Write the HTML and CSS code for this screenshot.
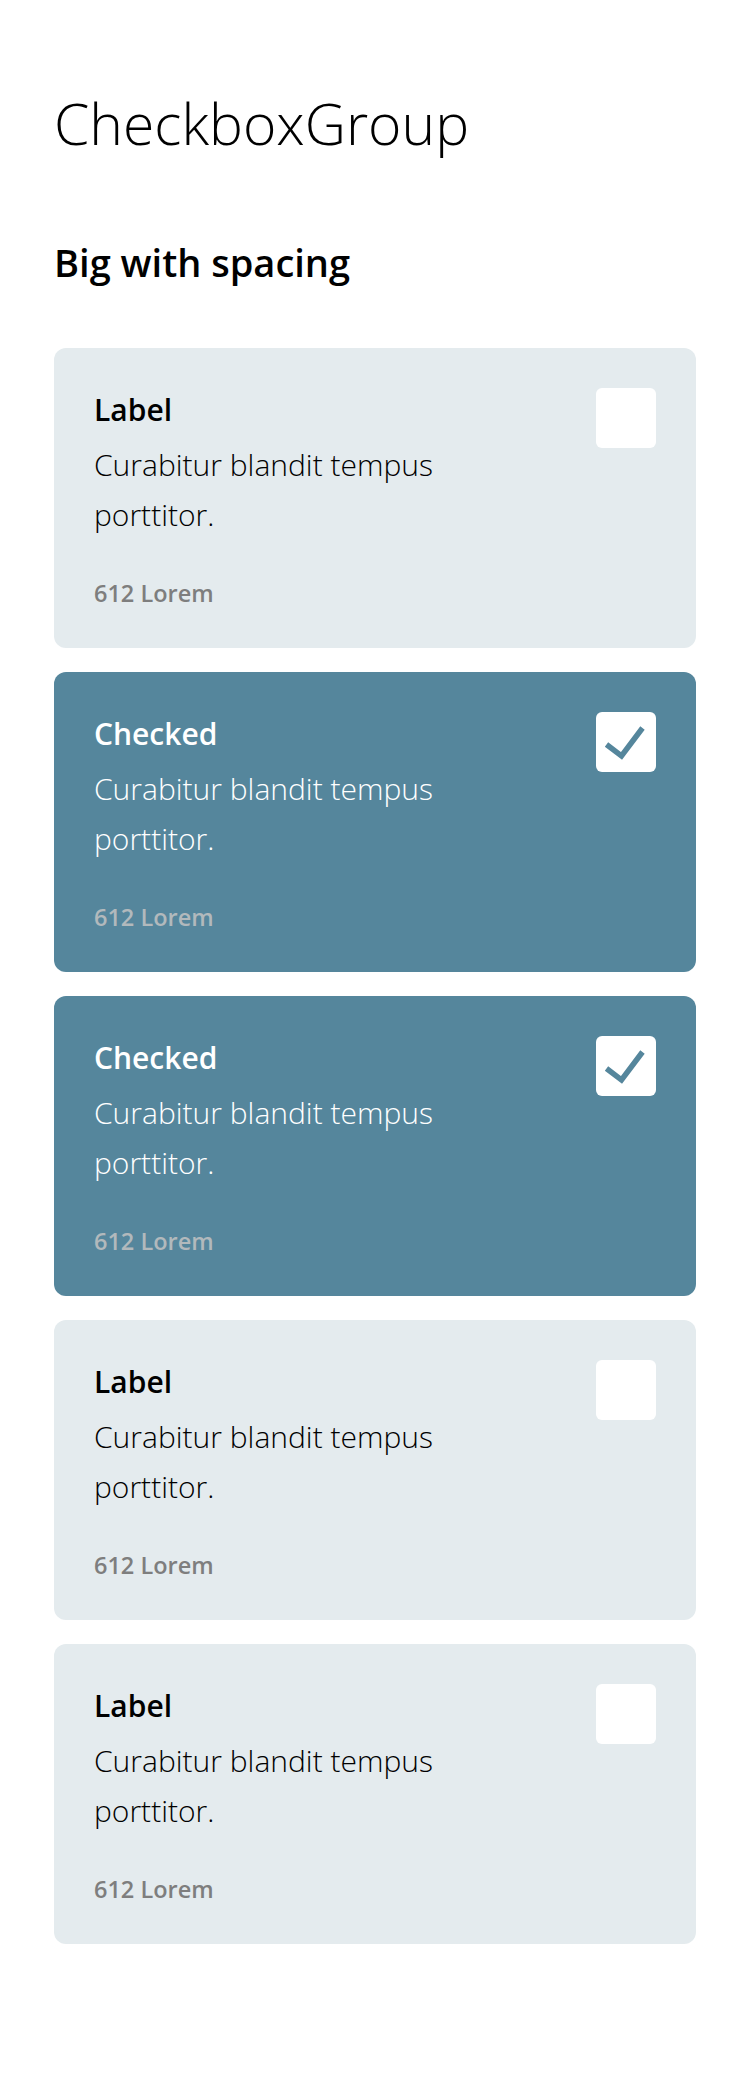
FILE: index.html
```html
<!DOCTYPE html>
<html lang="en">
<head>
<meta charset="utf-8">
<title>CheckboxGroup</title>
<link rel="stylesheet" href="styles.css">
</head>
<body>
<main class="page">
  <h1 class="title">CheckboxGroup</h1>
  <h2 class="subtitle">Big with spacing</h2>
  <div class="group">
    <label class="card">
      <div class="card-text">
        <div class="card-label">Label</div>
        <div class="card-desc">Curabitur blandit tempus porttitor.</div>
        <div class="card-meta">612 Lorem</div>
      </div>
      <span class="box"></span>
    </label>
    <label class="card checked">
      <div class="card-text">
        <div class="card-label">Checked</div>
        <div class="card-desc">Curabitur blandit tempus porttitor.</div>
        <div class="card-meta">612 Lorem</div>
      </div>
      <span class="box"><svg class="tick" viewBox="0 0 60 60" width="60" height="60"><path d="M10.5 32.5 L25.5 44 L46.5 16" fill="none" stroke="#55869c" stroke-width="5.5"/></svg></span>
    </label>
    <label class="card checked">
      <div class="card-text">
        <div class="card-label">Checked</div>
        <div class="card-desc">Curabitur blandit tempus porttitor.</div>
        <div class="card-meta">612 Lorem</div>
      </div>
      <span class="box"><svg class="tick" viewBox="0 0 60 60" width="60" height="60"><path d="M10.5 32.5 L25.5 44 L46.5 16" fill="none" stroke="#55869c" stroke-width="5.5"/></svg></span>
    </label>
    <label class="card">
      <div class="card-text">
        <div class="card-label">Label</div>
        <div class="card-desc">Curabitur blandit tempus porttitor.</div>
        <div class="card-meta">612 Lorem</div>
      </div>
      <span class="box"></span>
    </label>
    <label class="card">
      <div class="card-text">
        <div class="card-label">Label</div>
        <div class="card-desc">Curabitur blandit tempus porttitor.</div>
        <div class="card-meta">612 Lorem</div>
      </div>
      <span class="box"></span>
    </label>
  </div>
</main>
</body>
</html>
```

FILE: styles.css
```css
html, body {
  margin: 0;
  padding: 0;
  background: #ffffff;
}

body {
  font-family: "Open Sans", "Noto Sans", sans-serif;
  color: #000000;
}

.page {
  padding: 87px 54px 0 54px;
}

.title {
  margin: 0;
  font-size: 57px;
  line-height: 72px;
  font-weight: 300;
}

.subtitle {
  margin: 79px 0 0 0;
  font-size: 38px;
  line-height: 48px;
  font-weight: 600;
}

.group {
  margin-top: 62px;
  display: flex;
  flex-direction: column;
  gap: 24px;
  width: 642px;
}

.card {
  display: flex;
  align-items: flex-start;
  justify-content: space-between;
  padding: 40px;
  border-radius: 12px;
  background: #e4ebee;
}

.card-text {
  display: flex;
  flex-direction: column;
}

.card-label {
  font-size: 30px;
  line-height: 44px;
  font-weight: 600;
}

.card-desc {
  margin-top: 8px;
  max-width: 420px;
  font-size: 30px;
  line-height: 50px;
  font-weight: 300;
}

.card-meta {
  margin-top: 38px;
  font-size: 23.5px;
  line-height: 30px;
  font-weight: 600;
  color: #7e7e7e;
}

.box {
  flex: none;
  width: 60px;
  height: 60px;
  border-radius: 6px;
  background: #ffffff;
  display: block;
}

.tick {
  display: block;
}

.checked {
  background: #55869c;
  color: #ffffff;
}

.checked .card-meta {
  color: #b2b9bc;
}
```
